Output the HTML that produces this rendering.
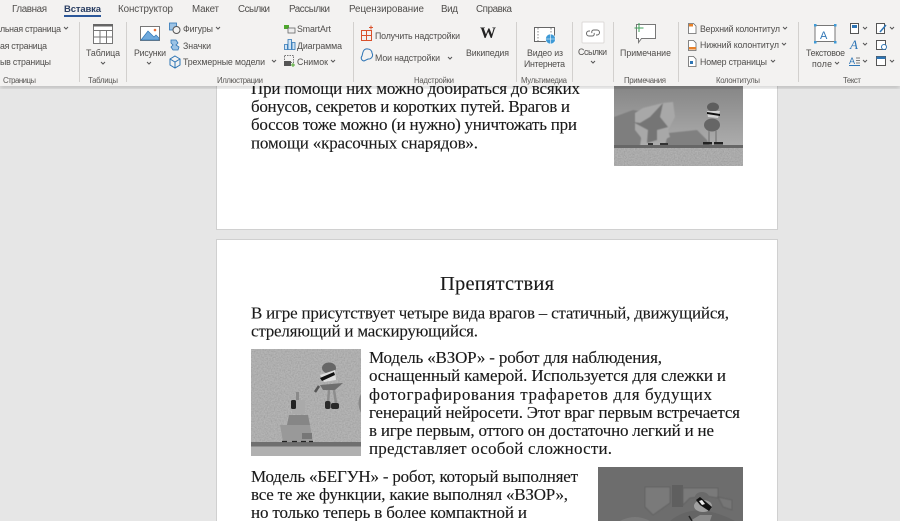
<!DOCTYPE html>
<html><head><meta charset="utf-8"><style>
html,body{margin:0;padding:0;background:#e6e6e6;width:900px;height:521px;overflow:hidden}
svg{display:block;filter:blur(.25px)}
.d{font-family:"Liberation Serif","Noto Serif CJK SC",serif;font-size:17px;fill:#1a1a1a;stroke:#1a1a1a;stroke-width:.12}
.r{font-family:"Liberation Sans","Noto Sans CJK SC",sans-serif;font-size:8.8px;fill:#504e4c}
.t{font-family:"Liberation Sans","Noto Sans CJK SC",sans-serif;font-size:9.8px;fill:#504e4c}
.g{font-family:"Liberation Sans","Noto Sans CJK SC",sans-serif;font-size:7.8px;fill:#5a5856}
</style></head><body>
<svg width="900" height="521" viewBox="0 0 900 521" xmlns="http://www.w3.org/2000/svg">
<defs>
<filter id="sh" x="-5%" y="-20%" width="110%" height="140%"><feGaussianBlur stdDeviation="2"/></filter>
<filter id="b"><feGaussianBlur stdDeviation="0.5"/></filter>
<filter id="n1" x="0" y="0" width="100%" height="100%"><feTurbulence type="fractalNoise" baseFrequency="0.7" numOctaves="2" seed="4"/><feColorMatrix type="saturate" values="0"/><feComponentTransfer><feFuncA type="linear" slope="0" intercept="0.28"/></feComponentTransfer></filter>
<linearGradient id="sky" x1="0" y1="0" x2="0" y2="1"><stop offset="0" stop-color="#868686"/><stop offset="1" stop-color="#adadad"/></linearGradient>
<clipPath id="c1"><rect x="614" y="86" width="129" height="80"/></clipPath>
<clipPath id="c3"><rect x="598" y="467" width="145" height="54"/></clipPath>
</defs>
<rect width="900" height="521" fill="#e6e6e6"/>

<!-- pages -->
<rect x="216.500" y="60" width="561" height="169.500" fill="#fff" stroke="#d0d0d0"/>
<rect x="216.500" y="239.500" width="561" height="300" fill="#fff" stroke="#d0d0d0"/>

<!-- image 1 -->
<g clip-path="url(#c1)">
<rect x="614" y="86" width="129" height="60" fill="url(#sky)"/>
<path d="M614 117 L633 110 L645 112 L640 146 H614Z" fill="#7e7e7e" filter="url(#b)"/>
<path d="M668 133 L697 130 L707 140 L710 146 H665Z" fill="#808080" filter="url(#b)"/>
<path d="M635 113 L643 108 L663 103 L673 102 L675 117 L668 130 L670 137 L657 143 L643 140 L635 130Z" fill="#a8a8a8" filter="url(#b)"/>
<path d="M640 123 L650 117 L663 103 L660 117 L668 127 L657 130 L657 140 L647 143 L648 130 L633 122Z" fill="#757575" filter="url(#b)"/>
<rect x="614" y="145" width="129" height="21" fill="#a4a4a4"/>
<rect x="614" y="145" width="129" height="3" fill="#676767"/>
<rect x="614" y="148" width="129" height="18" fill="#888" filter="url(#n1)"/>
<ellipse cx="713" cy="107" rx="6" ry="4.500" fill="#5e5e5e"/>
<path d="M707 111 L720 111 L718 118 L708 117Z" fill="#d4d4d4"/>
<path d="M707 112 L720 114 L720 116 L707 114Z" fill="#111"/>
<ellipse cx="712" cy="125" rx="8" ry="6.500" fill="#666"/>
<path d="M709 131v11M716 131v11" stroke="#8a8a8a" stroke-width="2"/>
<rect x="703" y="142" width="9" height="2.500" fill="#222"/><rect x="714" y="142" width="9" height="2.500" fill="#222"/>
<rect x="648" y="143" width="5" height="2" fill="#333"/><rect x="660" y="143" width="8" height="2" fill="#333"/>
</g>

<!-- image 2 -->
<g>
<rect x="251" y="349" width="110" height="107" fill="#a9a9a9"/>
<rect x="251" y="349" width="110" height="107" fill="#888" filter="url(#n1)"/>
<rect x="251" y="442" width="110" height="4.500" fill="#6f6f6f"/>
<rect x="251" y="446.500" width="110" height="9.500" fill="#b0b0b0"/>
<path d="M280 425 H310 L313 442 H283Z" fill="#999"/>
<path d="M289 415 H308 L310 425 H287Z" fill="#868686"/>
<rect x="292" y="400" width="13" height="14" fill="#aaa"/>
<rect x="291" y="400" width="5" height="9" rx="1.500" fill="#222"/>
<rect x="296" y="392" width="3" height="8" fill="#8a8a8a"/>
<rect x="302" y="433" width="10" height="6" fill="#777"/>
<path d="M282 441.500h5M292 441.500h5M301 441.500h5M309 441.500h4" stroke="#222" stroke-width="1.200"/>
<ellipse cx="329" cy="368" rx="7" ry="5.500" fill="#666"/>
<path d="M320 375 L335 370 L336 380 L324 382Z" fill="#ddd"/>
<path d="M320 378 L334 372 L335 375 L322 381Z" fill="#111"/>
<path d="M320 385 L343 383 L335 390 L323 390Z" fill="#6e6e6e"/>
<path d="M329 390 L328 403M334 390 L336 403" stroke="#8d8d8d" stroke-width="2.500"/>
<rect x="325" y="401" width="5.500" height="8" rx="2" fill="#2a2a2a"/><rect x="331" y="403" width="8" height="6" rx="2" fill="#2a2a2a"/>
<path d="M319 386 L315 392" stroke="#555" stroke-width="2.500"/>
<path d="M361 394 Q356 403 361 413Z" fill="#888"/>
</g>

<!-- image 3 -->
<g clip-path="url(#c3)">
<rect x="598" y="467" width="145" height="54" fill="#6d6d6d"/>
<path d="M645 487 L670 487 L670 503 L653 515 L645 507Z" fill="#7a7a7a" stroke="#626262" filter="url(#b)"/>
<rect x="672" y="485" width="11" height="22" fill="#5f5f5f"/>
<path d="M683 488 H718 V498 L706 496 L690 498 L683 505Z" fill="#7a7a7a" stroke="#626262" filter="url(#b)"/>
<path d="M718 497 L732 500 L732 510 L723 507Z" fill="#767676" stroke="#626262" filter="url(#b)"/>
<path d="M620 521 Q635 513 650 521Z" fill="#7a7a7a"/>
<path d="M670 521 Q695 500 735 521Z" fill="#656565"/>
<ellipse cx="702" cy="497" rx="7" ry="5" fill="#6a6a6a"/>
<ellipse cx="703" cy="506" rx="9" ry="6" fill="#a0a0a0"/>
<path d="M696 500 L700 497 L712 507 L709 511 L700 505Z" fill="#111"/>
<path d="M699 501l3-1 3 4-3 1z" fill="#eee"/>
<path d="M690 521 L700 515 L712 515 L710 521Z" fill="#8a8a8a"/>
<path d="M689 516l3 5" stroke="#222" stroke-width="1.500"/>
</g>

<!-- doc text -->
<text class="d" x="251" y="94" textLength="329">При помощи них можно добираться до всяких</text>
<text class="d" x="251" y="112" textLength="319">бонусов, секретов и коротких путей. Врагов и</text>
<text class="d" x="251" y="130" textLength="326">боссов тоже можно (и нужно) уничтожать при</text>
<text class="d" x="251" y="148.500" textLength="227">помощи «красочных снарядов».</text>
<text class="d" x="440" y="290" textLength="114" style="font-size:20.500px">Препятствия</text>
<text class="d" x="251" y="318.500" textLength="478">В игре присутствует четыре вида врагов – статичный, движущийся,</text>
<text class="d" x="251" y="336.500" textLength="227">стреляющий и маскирующийся.</text>
<text class="d" x="369" y="363" textLength="293">Модель «ВЗОР» - робот для наблюдения,</text>
<text class="d" x="369" y="381" textLength="357">оснащенный камерой. Используется для слежки и</text>
<text class="d" x="369" y="400" textLength="343">фотографирования трафаретов для будущих</text>
<text class="d" x="369" y="418" textLength="371">генераций нейросети. Этот враг первым встречается</text>
<text class="d" x="369" y="436" textLength="345">в игре первым, оттого он достаточно легкий и не</text>
<text class="d" x="369" y="454" textLength="243">представляет особой сложности.</text>
<text class="d" x="251" y="482" textLength="327">Модель «БЕГУН» - робот, который выполняет</text>
<text class="d" x="251" y="500" textLength="317">все те же функции, какие выполнял «ВЗОР»,</text>
<text class="d" x="251" y="518" textLength="276">но только теперь в более компактной и</text>

<!-- ribbon -->
<rect x="0" y="84" width="900" height="4" fill="#000" opacity=".2" filter="url(#sh)"/>
<rect x="0" y="0" width="900" height="86" fill="#f3f2f1"/>
<g stroke="#d2d0ce"><path d="M79.500 22V82M126.500 22V82M353.500 22V82M516.500 22V82M572.500 22V82M613.500 22V82M678.500 22V82M798.500 22V82"/></g>

<text class="t" x="12" y="12" textLength="35">Главная</text>
<text class="t" x="64" y="12" textLength="37" style="font-weight:bold;fill:#2b3f63;font-size:9.5px">Вставка</text>
<rect x="64" y="15" width="37" height="2" fill="#2b579a"/>
<text class="t" x="118" y="12" textLength="55">Конструктор</text>
<text class="t" x="192" y="12" textLength="27">Макет</text>
<text class="t" x="238" y="12" textLength="32">Ссылки</text>
<text class="t" x="289" y="12" textLength="41">Рассылки</text>
<text class="t" x="349" y="12" textLength="75">Рецензирование</text>
<text class="t" x="441" y="12" textLength="17">Вид</text>
<text class="t" x="476" y="12" textLength="36">Справка</text>

<!-- group labels -->
<text class="g" x="3" y="83" textLength="33">Страницы</text>
<text class="g" x="88" y="83" textLength="30">Таблицы</text>
<text class="g" x="217" y="83" textLength="46">Иллюстрации</text>
<text class="g" x="414" y="83" textLength="40">Надстройки</text>
<text class="g" x="521" y="83" textLength="46">Мультимедиа</text>
<text class="g" x="624" y="83" textLength="42">Примечания</text>
<text class="g" x="716" y="83" textLength="44">Колонтитулы</text>
<text class="g" x="843" y="83" textLength="18">Текст</text>

<!-- pages group -->
<text class="r" x="0" y="32" textLength="61">льная страница</text>
<text class="r" x="0" y="49" textLength="47">ая страница</text>
<text class="r" x="0" y="65" textLength="51">ыв страницы</text>
<path d="M64 27l2 2 2-2" fill="none" stroke="#555"/>

<!-- table -->
<g fill="none" stroke="#777"><rect x="93.500" y="24.500" width="19" height="19" fill="#fff"/><path d="M93.500 30.500h19M93.500 37h19M100 30.500V43.500M106.500 30.500V43.500"/></g>
<rect x="93" y="24" width="20" height="2.500" fill="#666"/>
<text class="r" x="86" y="56" textLength="34">Таблица</text>
<path d="M101 62l2 2 2-2" fill="none" stroke="#555"/>

<!-- pictures -->
<rect x="140.500" y="26.500" width="19" height="14" fill="#fff" stroke="#777"/>
<path d="M141 40 L148 31 L154 37 L156 35 L159 38 V40Z" fill="#6fa9dc" stroke="#2e75b5" stroke-width=".7"/>
<circle cx="155" cy="30" r="1.300" fill="#e8703a"/>
<text class="r" x="134" y="56" textLength="32">Рисунки</text>
<path d="M147 62l2 2 2-2" fill="none" stroke="#555"/>

<!-- shapes -->
<rect x="169.500" y="23" width="7" height="7" fill="#9cc3e5" stroke="#2e75b5" stroke-width=".8"/>
<circle cx="176.500" cy="30" r="3.500" fill="#f3f2f1" stroke="#555"/>
<text class="r" x="183" y="32" textLength="30">Фигуры</text>
<path d="M216 27l2 2 2-2" fill="none" stroke="#555"/>
<path d="M171 40h5l2 3-2 2 3 2-1 3-5 0-2-3 2-2-2-2z" fill="#9cc3e5" stroke="#2e75b5" stroke-width=".8"/>
<text class="r" x="183" y="49" textLength="28">Значки</text>
<path d="M175 56l5 3v6l-5 3-5-3v-6z M170 59l5 3 5-3M175 62v6" fill="none" stroke="#2e75b5"/>
<text class="r" x="183" y="65" textLength="82">Трехмерные модели</text>
<path d="M272 60l2 2 2-2" fill="none" stroke="#555"/>

<!-- smartart -->
<rect x="284" y="25" width="5" height="4" fill="#4ea72e"/><rect x="288" y="28" width="7" height="5" fill="#eee" stroke="#666" stroke-width=".8"/>
<text class="r" x="297" y="32" textLength="34">SmartArt</text>
<path d="M284.500 49.500v-5h3v5zM288 49.500v-10h3.500v10zM292 49.500v-7h3v7z" fill="#d3e5f4" stroke="#2e75b5" stroke-width=".8"/>
<text class="r" x="297" y="49" textLength="45">Диаграмма</text>
<rect x="284.500" y="55.500" width="9" height="7" fill="none" stroke="#777" stroke-dasharray="1.500 1"/>
<rect x="284" y="61" width="7" height="5" fill="#555"/><path d="M293 63v4M291 65h4" stroke="#4ea72e"/>
<text class="r" x="297" y="65" textLength="31">Снимок</text>
<path d="M331 60l2 2 2-2" fill="none" stroke="#555"/>

<!-- addins -->
<g fill="none" stroke="#d9512c"><rect x="361.500" y="30.500" width="10" height="10"/><path d="M361.500 35.500h10M366.500 30.500v10"/><path d="M369 27.500h4M371 25.500v4"/></g>
<text class="r" x="375" y="39" textLength="85">Получить надстройки</text>
<path d="M363 52a4 4 0 0 1 5-3 4 4 0 0 1 4 4 4 4 0 0 1-4 6l-4 2a3 3 0 0 1-2-5z" fill="none" stroke="#2e75b5"/>
<text class="r" x="375" y="61" textLength="65">Мои надстройки</text>
<path d="M448 57l2 2 2-2" fill="none" stroke="#555"/>
<text x="480" y="38" font-family="Liberation Serif,serif" font-size="16" font-weight="bold" fill="#222" textLength="15">W</text>
<text class="r" x="466" y="56" textLength="43">Википедия</text>

<!-- video -->
<rect x="534.500" y="27.500" width="20" height="14" fill="#fff" stroke="#666"/>
<path d="M538 28v13M551 28v6" stroke="#888" stroke-dasharray="1.500 1.500"/>
<circle cx="550.500" cy="39" r="5" fill="#3f9ad6" stroke="#fff" stroke-width=".6"/>
<path d="M545.500 39h10M550.500 34v10" stroke="#fff" stroke-width=".6"/>
<text class="r" x="527" y="56" textLength="36">Видео из</text>
<text class="r" x="524" y="67" textLength="41">Интернета</text>

<!-- links -->
<rect x="582" y="22" width="22" height="21" rx="1" fill="#fff" stroke="#dcdad8"/>
<path d="M590 31h-1a2 2 0 0 0 0 5h3a2 2 0 0 0 2-3M596 35h1a2 2 0 0 0 0-5h-3a2 2 0 0 0-2 3" fill="none" stroke="#666" stroke-width="1"/>
<text class="r" x="578" y="55" textLength="29">Ссылки</text>
<path d="M591 61l2 2 2-2" fill="none" stroke="#555"/>

<!-- comment -->
<path d="M636.500 24.500h19v14h-14l-3 4v-4h-2z" fill="#fff" stroke="#777"/>
<path d="M639 23v9M634.500 28h9" stroke="#3da35a" stroke-width="1"/>
<text class="r" x="620" y="56" textLength="51">Примечание</text>

<!-- header footer -->
<g fill="#fff" stroke="#666" stroke-width=".8"><path d="M688.500 23.500h5l2.500 2.500v7.500h-7.500z"/><path d="M688.500 40.500h5l2.500 2.500v7.500h-7.500z"/><path d="M688.500 56.500h5l2.500 2.500v7.500h-7.500z"/></g>
<rect x="689" y="24" width="4" height="2.500" fill="#e8822a"/><rect x="689" y="47" width="7" height="2.500" fill="#e8822a"/><rect x="690" y="61" width="3" height="3" fill="#2e75b5"/>
<text class="r" x="700" y="32" textLength="80">Верхний колонтитул</text>
<path d="M783 27l2 2 2-2" fill="none" stroke="#555"/>
<text class="r" x="700" y="48" textLength="79">Нижний колонтитул</text>
<path d="M782 43l2 2 2-2" fill="none" stroke="#555"/>
<text class="r" x="700" y="65" textLength="67">Номер страницы</text>
<path d="M771 60l2 2 2-2" fill="none" stroke="#555"/>

<!-- text group -->
<rect x="815" y="25.500" width="20" height="16" fill="#fff" stroke="#777"/>
<g fill="#3f9ad6"><rect x="814" y="24" width="2.500" height="2.500"/><rect x="834" y="24" width="2.500" height="2.500"/><rect x="814" y="41" width="2.500" height="2.500"/><rect x="834" y="41" width="2.500" height="2.500"/></g>
<text x="820" y="39" font-family="Liberation Sans,sans-serif" font-size="11" fill="#2e75b5">A</text>
<text class="r" x="806" y="56" textLength="39">Текстовое</text>
<text class="r" x="812" y="67" textLength="20">поле</text>
<path d="M835 62l2 2 2-2" fill="none" stroke="#555"/>

<rect x="850.500" y="23.500" width="8" height="10" fill="#fff" stroke="#555"/><rect x="852" y="25" width="5" height="3" fill="#2e75b5"/>
<path d="M863 27l2 2 2-2M863 43l2 2 2-2M863 60l2 2 2-2M890 27l2 2 2-2M890 60l2 2 2-2" fill="none" stroke="#555"/>
<text x="850" y="49" font-family="Liberation Serif,serif" font-size="13" font-style="italic" fill="#2e75b5">A</text>
<text x="849" y="64" font-family="Liberation Sans,sans-serif" font-size="9" fill="#2e75b5">A</text>
<path d="M856 58h4M856 60.500h4M856 63h4" stroke="#555" stroke-width=".8"/><path d="M849 65.500h11" stroke="#2e75b5"/>
<rect x="876.500" y="23.500" width="8" height="10" fill="#fff" stroke="#555"/><path d="M880 32l6-7" stroke="#2e75b5" stroke-width="1.500"/>
<rect x="876.500" y="40.500" width="9" height="9" fill="#fff" stroke="#555"/><circle cx="884" cy="47" r="2.500" fill="#fff" stroke="#2e75b5"/>
<rect x="876.500" y="56.500" width="9" height="9" fill="#fff" stroke="#555"/><rect x="876.500" y="56.500" width="9" height="2.500" fill="#2e75b5"/>
</svg>
</body></html>
